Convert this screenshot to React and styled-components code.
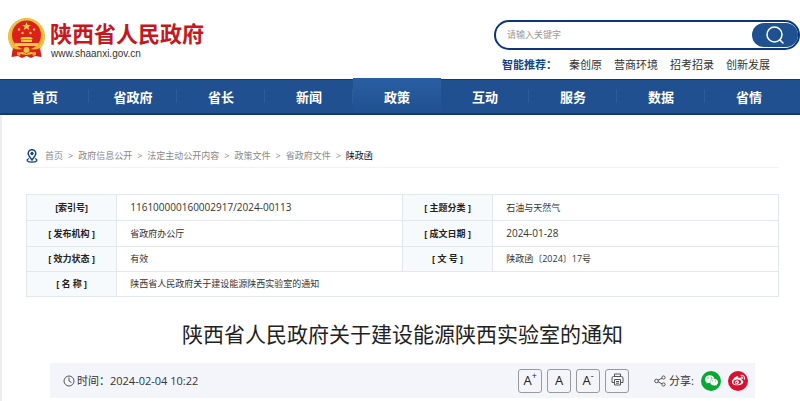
import React from "react";
import styled, { createGlobalStyle } from "styled-components";
import { AiFillWechat } from "react-icons/ai";
import { FaWeibo } from "react-icons/fa";

const GlobalStyle = createGlobalStyle`
  *, *::before, *::after { box-sizing: border-box; }
  body {
    margin: 0;
    background: #fff;
    color: #333;
    font-family: "Open Sans", "Noto Sans CJK SC", sans-serif;
    font-size: 9px;
    line-height: 16px;
  }
  a { color: inherit; text-decoration: none; }
  button, input { font: inherit; color: inherit; }
  svg { display: block; flex: none; }
`;

const Header = styled.header`
  display: flex;
  justify-content: space-between;
  align-items: flex-start;
  height: 78px;
`;

const Brand = styled.a`
  display: flex;
  gap: 3px;
  padding: 17px 0 0 6px;
`;

const BrandText = styled.div`
  display: flex;
  flex-direction: column;
  gap: 4px;
  padding-top: 2px;
`;

const BrandName = styled.strong`
  color: #c8161d;
  font: 700 22px/26px "Noto Sans CJK SC", sans-serif;
`;

const BrandUrl = styled.span`
  padding-left: 1px;
  font: 10px/10px "Liberation Sans", sans-serif;
`;

const SearchArea = styled.div`
  width: 306px;
  padding-top: 20px;
`;

const SearchForm = styled.form`
  display: flex;
  align-items: center;
  height: 30px;
  padding: 0 0 0 11px;
  border: 2px solid #0b357c;
  border-radius: 15px;
`;

const SearchInput = styled.input`
  flex: 1;
  min-width: 0;
  padding: 0;
  border: 0;
  outline: 0;
  background: none;
  &::placeholder { color: #999; }
`;

const SearchButton = styled.button`
  display: flex;
  align-items: center;
  justify-content: center;
  width: 46px;
  height: 24px;
  padding: 0;
  border: 0;
  border-radius: 12px;
  background: #1f5090;
`;

const Recommend = styled.div`
  display: flex;
  gap: 12px;
  padding: 7px 0 0 8px;
  font-size: 11px;
  white-space: nowrap;
`;

const RecommendLabel = styled.strong`
  color: #164487;
`;

const Nav = styled.nav`
  display: flex;
  height: 37px;
  padding: 0 7px 0 1px;
  background: linear-gradient(#fff 1px, #16386f 1px, #16386f 2px, #20508f 2px, #20508f 35px, #16386f 35px);
`;

const NavItem = styled.a`
  flex: 1;
  display: flex;
  align-items: center;
  justify-content: center;
  color: #fff;
  font-size: 13px;
  font-weight: 700;
  margin-bottom: 2px;
  padding-top: 3px;
  background: ${(p) =>
    p.$active
      ? "linear-gradient(#2a5fa4, #20508f)"
      : "linear-gradient(#2c5c9a, #2c5c9a) right center / 1px 14px no-repeat"};

  &:last-child { background: none; }
`;

const Main = styled.main`
  padding: 32px 21px 4px 24px;
  border-left: 2px solid #eee;
`;

const Crumbs = styled.nav`
  display: flex;
  align-items: center;
  gap: 5px;
  height: 21px;
  padding-bottom: 3px;
  border-bottom: 1px solid #f2f2f2;
  color: #888;
`;

const PinIcon = styled.svg`
  margin-right: 2px;
`;

const CurrentCrumb = styled.span`
  color: #111;
`;

const Facts = styled.table`
  width: 100%;
  margin-top: 26px;
  border-collapse: collapse;
  table-layout: fixed;
  color: #333;
`;

const Column = styled.col`
  width: ${(p) => p.$share};
`;

const FactLabel = styled.th`
  height: 25px;
  padding: 4px 0;
  border: 1px solid #e1e9ec;
  background: #f6fafd;
  color: #222;
  font-weight: 700;
  text-align: center;
  white-space: nowrap;
`;

const FactValue = styled.td`
  padding: 4px 13px;
  border: 1px solid #e1e9ec;
`;

const SerialNumber = styled.span`
  font-size: 10px;
`;

const Title = styled.h1`
  margin: 21px 0 13px;
  color: #222;
  font-size: 21px;
  font-weight: 400;
  line-height: 32px;
  text-align: center;
`;

const Toolbar = styled.div`
  display: flex;
  align-items: center;
  justify-content: space-between;
  height: 35px;
  margin: 0 24px;
  padding: 0 7px 0 13px;
  background: #f4f5fb;
  font-size: 11px;
`;

const Cluster = styled.div`
  display: flex;
  align-items: center;
  gap: ${(p) => p.$gap};
`;

const ToolButton = styled.button`
  display: flex;
  align-items: center;
  justify-content: center;
  width: 24px;
  height: 24px;
  padding: 0 0 2px;
  border: 1px solid #999;
  border-radius: 3px;
  background: none;
  color: #222;
  font-family: "Open Sans", sans-serif;
  font-size: 13px;
`;

const Sign = styled.sup`
  align-self: flex-start;
  font-size: 9px;
  line-height: 12px;
`;

const ShareLink = styled.a`
  display: flex;
  align-items: center;
  justify-content: center;
  width: 20px;
  height: 20px;
  border-radius: 50%;
  background: ${(p) => p.$color};
  color: #fff;
  font-size: ${(p) => p.$glyph};
`;

const Emblem = () => (
  <svg width="41" height="43" viewBox="0 0 41 43" aria-hidden="true">
    <path d="M7 30 5.500 40l6.500-1 4 2 4.500-2 4.500 2 4-2 6.500 1L34 30z" fill="#d71f1b" />
    <circle cx="20.500" cy="19.500" r="18.500" fill="#e9b536" />
    <circle cx="20.500" cy="19.500" r="17" fill="none" stroke="#f3cb52" strokeWidth="1.500" strokeDasharray="2 1" />
    <circle cx="20.500" cy="18" r="14.500" fill="#dc211d" />
    <path d="m20.500 5 1.200 3h3.200l-2.500 2 .9 3-2.800-1.800L17.700 13l.9-3-2.500-2h3.200z" fill="#f5cd3c" />
    <g fill="#f5cd3c">
      <circle cx="13" cy="12.500" r="1.200" />
      <circle cx="16.500" cy="16" r="1.200" />
      <circle cx="24.500" cy="16" r="1.200" />
      <circle cx="28" cy="12.500" r="1.200" />
      <path d="m14 22 2-2h9l2 2zM15 22.500h11V25H15zM9 26h23v3H9z" />
    </g>
    <path d="M7 31q7 3 11 0h5q4 3 11 0l-2 5-8-1-3.500 2-3.500-2-8 1z" fill="#dc211d" />
    <circle cx="20.500" cy="33" r="3" fill="#f2c239" />
    <path d="m11 35 4 1-1 3-3-1zm19 0-4 1 1 3 3-1z" fill="#e9a52f" />
  </svg>
);

const SearchGlyph = () => (
  <svg width="20" height="20" viewBox="0 0 20 20" fill="none" stroke="#fff" strokeWidth="1.500" strokeLinecap="round" aria-hidden="true">
    <circle cx="9.500" cy="9.500" r="7.500" />
    <path d="m15 15 3 3" />
  </svg>
);

const ClockGlyph = () => (
  <svg width="12" height="12" viewBox="0 0 12 12" fill="none" stroke="#555" aria-hidden="true">
    <circle cx="6" cy="6" r="5" />
    <path d="M6 2.500V6l2.500 1.500" />
  </svg>
);

const PrintGlyph = () => (
  <svg width="13" height="13" viewBox="0 0 13 13" fill="none" stroke="#555" strokeLinejoin="round" aria-hidden="true">
    <path d="M3.500 3.500V1h6v2.500M3.500 9.500H1V5q0-1.500 1.500-1.500h8Q12 3.500 12 5v4.500H9.500" />
    <path d="M3.500 6.500h6V12h-6zM5 8.500h3M5 10.200h3" />
  </svg>
);

const ShareGlyph = () => (
  <svg width="12" height="12" viewBox="0 0 12 12" fill="none" stroke="#555" aria-hidden="true">
    <circle cx="2.500" cy="6" r="1.800" />
    <circle cx="9.500" cy="2.500" r="1.600" />
    <circle cx="9.500" cy="9.500" r="1.600" />
    <path d="m4 5.200 4-2M4 6.800l4 2" />
  </svg>
);

const recommended = ["秦创原", "营商环境", "招考招录", "创新发展"];
const sections = ["首页", "省政府", "省长", "新闻", "政策", "互动", "服务", "数据", "省情"];
const trail = ["首页", "政府信息公开", "法定主动公开内容", "政策文件", "省政府文件"];
const facts = [
  ["[索引号]", <SerialNumber key="n">116100000160002917/2024-00113</SerialNumber>, "[ 主题分类 ]", "石油与天然气"],
  ["[ 发布机构 ]", "省政府办公厅", "[ 成文日期 ]", <SerialNumber key="d">2024-01-28</SerialNumber>],
  ["[ 效力状态 ]", "有效", "[ 文 号 ]", "陕政函〔2024〕17号"],
];

export default function App() {
  return (
    <>
      <GlobalStyle />
      <Header>
        <Brand href="#">
          <Emblem />
          <BrandText>
            <BrandName>陕西省人民政府</BrandName>
            <BrandUrl>www.shaanxi.gov.cn</BrandUrl>
          </BrandText>
        </Brand>
        <SearchArea>
          <SearchForm role="search">
            <SearchInput type="text" aria-label="请输入关键字" placeholder="请输入关键字" />
            <SearchButton type="button" aria-label="搜索">
              <SearchGlyph />
            </SearchButton>
          </SearchForm>
          <Recommend>
            <RecommendLabel>智能推荐：</RecommendLabel>
            {recommended.map((t) => (
              <a href="#" key={t}>{t}</a>
            ))}
          </Recommend>
        </SearchArea>
      </Header>
      <Nav>
        {sections.map((t) => (
          <NavItem href="#" key={t} $active={t === "政策"}>{t}</NavItem>
        ))}
      </Nav>
      <Main>
        <Crumbs>
          <PinIcon width="12" height="14" viewBox="0 0 12 14" fill="none" stroke="#174584" aria-hidden="true">
            <path d="M6 11C3.500 8 2.200 6.500 2.200 4.500a3.800 3.800 0 0 1 7.600 0C9.800 6.500 8.500 8 6 11z" strokeWidth="1.500" />
            <circle cx="6" cy="4.500" r="1.300" fill="#174584" />
            <path d="M3 9.500C-.5 11 1 13.200 6 13.200s6.500-2.200 3-3.700" strokeWidth="1.300" />
          </PinIcon>
          {trail.map((t) => (
            <React.Fragment key={t}>
              <a href="#">{t}</a>
              <span>&gt;</span>
            </React.Fragment>
          ))}
          <CurrentCrumb>陕政函</CurrentCrumb>
        </Crumbs>
        <Facts>
          <colgroup>
            <Column $share="12%" />
            <Column $share="38%" />
            <Column $share="12%" />
            <Column $share="38%" />
          </colgroup>
          <tbody>
            {facts.map(([a, b, c, d]) => (
              <tr key={a}>
                <FactLabel scope="row">{a}</FactLabel>
                <FactValue>{b}</FactValue>
                <FactLabel scope="row">{c}</FactLabel>
                <FactValue>{d}</FactValue>
              </tr>
            ))}
            <tr>
              <FactLabel scope="row">[ 名 称 ]</FactLabel>
              <FactValue colSpan={3}>陕西省人民政府关于建设能源陕西实验室的通知</FactValue>
            </tr>
          </tbody>
        </Facts>
        <Title>陕西省人民政府关于建设能源陕西实验室的通知</Title>
        <Toolbar>
          <Cluster $gap="2px">
            <ClockGlyph />
            <span>时间：2024-02-04 10:22</span>
          </Cluster>
          <Cluster $gap="25px">
            <Cluster $gap="5px">
              <ToolButton type="button" aria-label="放大字号">A<Sign>+</Sign></ToolButton>
              <ToolButton type="button" aria-label="默认字号">A</ToolButton>
              <ToolButton type="button" aria-label="缩小字号">A<Sign>-</Sign></ToolButton>
              <ToolButton type="button" aria-label="打印"><PrintGlyph /></ToolButton>
            </Cluster>
            <Cluster $gap="7px">
              <Cluster $gap="3px">
                <ShareGlyph />
                <span>分享:</span>
              </Cluster>
              <ShareLink href="#" aria-label="微信" $color="#09a835" $glyph="15px"><AiFillWechat /></ShareLink>
              <ShareLink href="#" aria-label="微博" $color="#d9102f" $glyph="13px"><FaWeibo /></ShareLink>
            </Cluster>
          </Cluster>
        </Toolbar>
      </Main>
    </>
  );
}
